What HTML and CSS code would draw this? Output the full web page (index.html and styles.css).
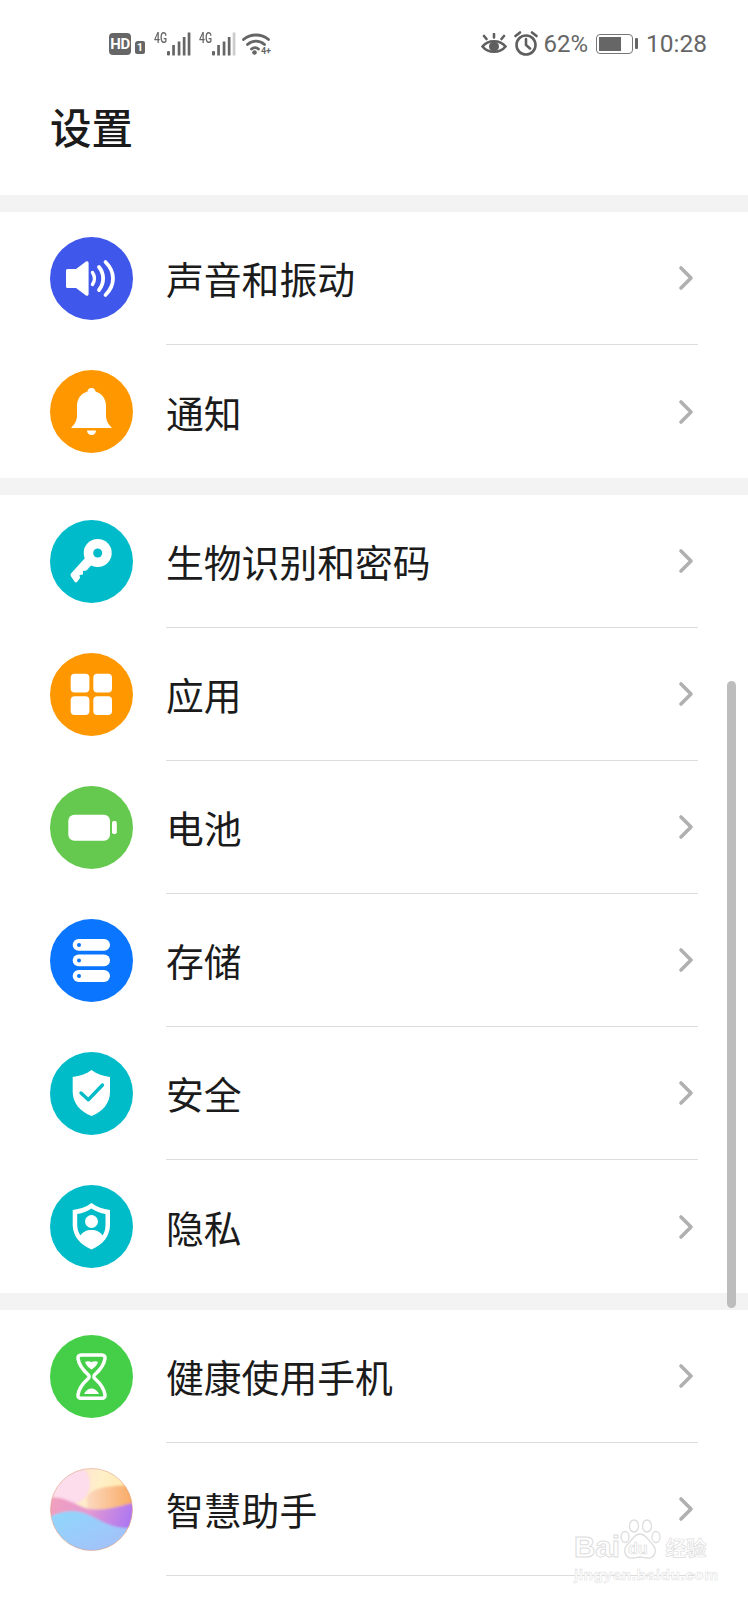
FILE: index.html
```html
<!DOCTYPE html>
<html lang="zh-CN">
<head>
    <meta charset="UTF-8">
    <title>设置</title>
    <meta name="viewport" content="width=device-width, initial-scale=1.0">
    <link rel="stylesheet" href="styles.css">
</head>
<body>
    <svg class="defs" width="0" height="0">
        <symbol id="chev" viewBox="0 0 18 28"><path d="M3 4l10 10L3 24" fill="none" stroke="#b0b0b0" stroke-width="3.600" stroke-linecap="round" stroke-linejoin="round"/></symbol>
        <symbol id="bars" viewBox="0 0 24 24"><g fill="#666"><rect x="0" y="19" width="3" height="4.500" rx="1"/><rect x="5.200" y="13" width="2.700" height="10.500"/><rect x="10.700" y="9.500" width="2.700" height="14"/><rect x="15.800" y="5" width="2.700" height="18.500"/><rect x="20.700" y="0.500" width="2.700" height="23"/></g></symbol>
        <symbol id="bars-weak" viewBox="0 0 24 24"><g fill="#666"><rect x="0" y="19" width="3" height="4.500" rx="1"/><rect x="5.200" y="13" width="2.700" height="10.500"/><rect x="10.700" y="9.500" width="2.700" height="14"/><rect x="15.800" y="5" width="2.700" height="18.500"/></g><rect x="20.700" y="0.500" width="2.700" height="23" fill="#ccc"/></symbol>
    </svg>

    <div class="status-bar">
        <div class="status-left">
            <span class="hd">HD</span>
            <span class="sim">1</span>
            <span class="signal"><span class="net">4G</span><svg class="bars" width="24" height="24"><use href="#bars"/></svg></span>
            <span class="signal"><span class="net">4G</span><svg class="bars" width="24" height="24"><use href="#bars-weak"/></svg></span>
            <span class="wifi">
                <svg width="28" height="22" viewBox="0 0 28 22" fill="none" stroke="#666" stroke-width="2.800" stroke-linecap="round">
                    <path d="M1.500 6.500C8.500 0.500 19.500 0.500 26.500 6.500"/>
                    <path d="M5.500 11.500C10.500 7 17.500 7 22.500 11.500"/>
                    <path d="M9.500 16C11.500 14.200 14.500 14.200 16.500 16"/>
                    <circle cx="12.500" cy="19.500" r="2.300" fill="#666" stroke="none"/>
                </svg>
                <span class="wifi-tag">4+</span>
            </span>
        </div>
        <div class="status-right">
            <svg width="26" height="22" viewBox="0 0 26 22" fill="none" stroke="#5f5f5f" stroke-width="2.600" stroke-linecap="round">
                <path d="M1.500 13.500C7 6.500 19 6.500 24.500 13.500C19 20.500 7 20.500 1.500 13.500Z"/>
                <circle cx="13" cy="13.500" r="5" fill="#5f5f5f" stroke="none"/>
                <path d="M3 3l2.500 3M13 1v3.500M23 3l-2.500 3"/>
            </svg>
            <svg class="alarm" width="24" height="25" viewBox="0 0 24 25" fill="none" stroke="#5f5f5f" stroke-width="2.600" stroke-linecap="round">
                <circle cx="12" cy="14" r="9.500"/>
                <path d="M12 8v6l4 3.500M1.500 5L6 1.500M22.500 5L18 1.500"/>
            </svg>
            <span class="pct">62%</span>
            <span class="battery"><span class="battery-fill"></span></span>
            <span class="battery-nub"></span>
            <span class="clock">10:28</span>
        </div>
    </div>

    <header class="title-bar">
        <h1>设置</h1>
    </header>

    <div class="band"></div>
    <ul class="group">
        <li class="row">
            <svg class="icon" viewBox="0 0 83 83">
                <circle cx="41.500" cy="41.500" r="41.500" fill="#3f57eb"/>
                <path d="M16 33.500a1.500 1.500 0 0 1 1.500-1.500H26l10-7.500c1.300-.9 2.600 0 2.600 1.500v31c0 1.500-1.300 2.400-2.600 1.500L26 51h-8.500a1.500 1.500 0 0 1-1.500-1.500Z" fill="#fff"/>
                <g fill="none" stroke="#fff" stroke-linecap="round">
                    <path d="M42.500 35.500c2.500 3.800 2.500 8.200 0 12" stroke-width="3.400"/>
                    <path d="M49 30c5.500 7 5.500 16 0 23" stroke-width="3.800"/>
                    <path d="M55.500 25c10 10 10 23 0 33" stroke-width="3.800"/>
                </g>
            </svg>
            <div class="row-body"><span class="label">声音和振动</span><svg class="chevron"><use href="#chev"/></svg></div>
        </li>
        <li class="row">
            <svg class="icon" viewBox="0 0 83 83">
                <circle cx="41.500" cy="41.500" r="41.500" fill="#ff9800"/>
                <path d="M41.500 18c2.400 0 4 1.700 4 3.600C52 23.500 56 29 56 36v10c0 5 3 9 6 12H21c3-3 6-7 6-12V36c0-7 4-12.500 10.500-14.400 0-1.900 1.600-3.600 4-3.600Z" fill="#fff"/>
                <path d="M37 60.500h9a4.500 4.500 0 0 1-9 0Z" fill="#fff"/>
            </svg>
            <div class="row-body last"><span class="label">通知</span><svg class="chevron"><use href="#chev"/></svg></div>
        </li>
    </ul>

    <div class="band"></div>
    <ul class="group">
        <li class="row">
            <svg class="icon" viewBox="0 0 83 83">
                <circle cx="41.500" cy="41.500" r="41.500" fill="#00bccb"/>
                <circle cx="47.700" cy="33" r="14" fill="#fff"/>
                <path d="M35.500 37.500L21 53.500q-1 1.500 0 3L24.500 61.500q1 1.500 2.500 .5L30 58L29.500 55L33 54.500L33 51L36.500 50.500L42 44.500Z" fill="#fff"/>
                <circle cx="47.700" cy="33" r="4.500" fill="#00bccb"/>
            </svg>
            <div class="row-body"><span class="label">生物识别和密码</span><svg class="chevron"><use href="#chev"/></svg></div>
        </li>
        <li class="row">
            <svg class="icon" viewBox="0 0 83 83">
                <circle cx="41.500" cy="41.500" r="41.500" fill="#ff9800"/>
                <g fill="#fff">
                    <rect x="20.700" y="20.700" width="18.700" height="18.700" rx="4"/>
                    <rect x="43.300" y="20.700" width="18.700" height="18.700" rx="4"/>
                    <rect x="20.700" y="43.300" width="18.700" height="18.700" rx="4"/>
                    <rect x="43.300" y="43.300" width="18.700" height="18.700" rx="4"/>
                </g>
            </svg>
            <div class="row-body"><span class="label">应用</span><svg class="chevron"><use href="#chev"/></svg></div>
        </li>
        <li class="row">
            <svg class="icon" viewBox="0 0 83 83">
                <circle cx="41.500" cy="41.500" r="41.500" fill="#66c94f"/>
                <rect x="18.300" y="28.700" width="41.700" height="26" rx="6" fill="#fff"/>
                <rect x="62" y="35" width="4.800" height="13" rx="1.800" fill="#fff"/>
            </svg>
            <div class="row-body"><span class="label">电池</span><svg class="chevron"><use href="#chev"/></svg></div>
        </li>
        <li class="row">
            <svg class="icon" viewBox="0 0 83 83">
                <circle cx="41.500" cy="41.500" r="41.500" fill="#0a75ff"/>
                <g fill="#fff">
                    <rect x="22.700" y="20" width="37.300" height="11.700" rx="5.800"/>
                    <rect x="22.700" y="35.500" width="37.300" height="11.700" rx="5.800"/>
                    <rect x="22.700" y="51" width="37.300" height="12" rx="6"/>
                </g>
                <g fill="#0a75ff">
                    <circle cx="29" cy="26" r="2"/>
                    <circle cx="29" cy="41.500" r="2"/>
                    <circle cx="29" cy="57" r="2"/>
                </g>
            </svg>
            <div class="row-body"><span class="label">存储</span><svg class="chevron"><use href="#chev"/></svg></div>
        </li>
        <li class="row">
            <svg class="icon" viewBox="0 0 83 83">
                <circle cx="41.500" cy="41.500" r="41.500" fill="#00bcc9"/>
                <path d="M41.500 18C47 22 53 24 60 25v15c0 11-7.500 20-18.500 24C30.500 60 22.700 51 22.700 40V25C30 24 36 22 41.500 18Z" fill="#fff"/>
                <path d="M31 41l7.300 6.700L52.500 33" fill="none" stroke="#00bcc9" stroke-width="3.400" stroke-linecap="round" stroke-linejoin="round"/>
            </svg>
            <div class="row-body"><span class="label">安全</span><svg class="chevron"><use href="#chev"/></svg></div>
        </li>
        <li class="row">
            <svg class="icon" viewBox="0 0 83 83">
                <circle cx="41.500" cy="41.500" r="41.500" fill="#00bcc9"/>
                <path d="M41.500 18C47 22 53 24 60 25v15c0 11-7.500 20-18.500 24.500C30.500 60 22.700 51 22.700 40V25C30 24 36 22 41.500 18Z" fill="#fff"/>
                <path d="M41.500 23.500C46 26.500 50 28 55.500 29v11c0 4-1 7.500-3 10.500-2-3.500-6-5.500-11-5.500s-9 2-11 5.500c-2-3-3.300-6.500-3.300-10.500V29C33 28 37 26.500 41.500 23.500Z" fill="#00bcc9"/>
                <circle cx="41.500" cy="36.500" r="6.500" fill="#fff"/>
            </svg>
            <div class="row-body last"><span class="label">隐私</span><svg class="chevron"><use href="#chev"/></svg></div>
        </li>
    </ul>

    <div class="band"></div>
    <ul class="group">
        <li class="row">
            <svg class="icon" viewBox="0 0 83 83">
                <circle cx="41.500" cy="41.500" r="41.500" fill="#45cf48"/>
                <path d="M31 20h21c2 0 3.300 1.500 3 3.500-1 7-5.500 12-10 16-1.500 1.300-1.500 3 0 4.300 4.500 4 9 9 10 16 .3 2-1 3.500-3 3.500H31c-2 0-3.300-1.500-3-3.500 1-7 5.500-12 10-16 1.500-1.300 1.500-3 0-4.300-4.500-4-9-9-10-16-.3-2 1-3.500 3-3.500Z" fill="none" stroke="#fff" stroke-width="3.500"/>
                <path d="M35 27c3-1.500 4.500-.5 6.500 0 2-.5 4-1.500 6.500 0-1 3-3.500 5.500-6.500 7.500-3-2-5.500-4.500-6.500-7.500ZM34 59c2-4 5-5.500 7.500-5.500S47 55 49 59Z" fill="#fff"/>
            </svg>
            <div class="row-body"><span class="label">健康使用手机</span><svg class="chevron"><use href="#chev"/></svg></div>
        </li>
        <li class="row">
            <svg class="icon" viewBox="0 0 83 83">
                <defs>
                    <clipPath id="orb"><circle cx="41.500" cy="41.500" r="41"/></clipPath>
                    <filter id="soft" x="-10%" y="-10%" width="120%" height="120%"><feGaussianBlur stdDeviation="1.200"/></filter>
                    <linearGradient id="orb-sky" x1="0" y1="0" x2="1" y2="0.300"><stop offset="0" stop-color="#fbd3dd"/><stop offset="0.600" stop-color="#fff0c8"/><stop offset="1" stop-color="#ffe6a8"/></linearGradient>
                    <linearGradient id="orb-warm" x1="0" y1="0" x2="1" y2="0"><stop offset="0" stop-color="#fdd9c0"/><stop offset="1" stop-color="#f8a860"/></linearGradient>
                    <linearGradient id="orb-mid" x1="0" y1="0" x2="1" y2="0.200"><stop offset="0" stop-color="#f2a0bb"/><stop offset="0.500" stop-color="#e59ad2"/><stop offset="1" stop-color="#ae78f0"/></linearGradient>
                    <linearGradient id="orb-low" x1="0" y1="0" x2="1" y2="1"><stop offset="0" stop-color="#8ed8fc"/><stop offset="1" stop-color="#a8bcf9"/></linearGradient>
                </defs>
                <g clip-path="url(#orb)">
                    <rect width="83" height="83" fill="url(#orb-sky)"/>
                    <g filter="url(#soft)">
                        <circle cx="20" cy="16" r="20" fill="#fddcec"/>
                        <path d="M37 28C43 20 55 18 84 17V50H37Z" fill="url(#orb-warm)"/>
                        <path d="M-2 30C10 28 20 33 30 38C42 44 60 42 85 34V72H-2Z" fill="url(#orb-mid)"/>
                        <path d="M-2 50C8 44 22 41 34 45C48 50 60 62 85 60V85H-2Z" fill="url(#orb-low)"/>
                    </g>
                </g>
                <circle cx="41.500" cy="41.500" r="41" fill="none" stroke="#e2a58c" stroke-opacity="0.600"/>
            </svg>
            <div class="row-body"><span class="label">智慧助手</span><svg class="chevron"><use href="#chev"/></svg></div>
        </li>
    </ul>

    <div class="scrollbar"></div>

    <div class="watermark">
        <svg class="paw" width="42" height="42" viewBox="0 0 42 42" fill="none" stroke="#ddd" stroke-width="1.300">
            <ellipse cx="14" cy="7" rx="4.500" ry="6"/>
            <ellipse cx="27" cy="7" rx="4.500" ry="6"/>
            <ellipse cx="5" cy="18" rx="4" ry="5.500"/>
            <ellipse cx="36" cy="18" rx="4" ry="5.500"/>
            <path d="M20 15c6 0 8 6 13 11 5 6 1 14-6 13-3 0-5-1-7-1s-4 1-7 1c-7 1-11-7-6-13 5-5 7-11 13-11Z"/>
        </svg>
        <div class="wm-top">
            <span class="wm-bai">Bai</span>
            <span class="wm-du">du</span>
            <span class="wm-jy">经验</span>
        </div>
        <div class="wm-url">jingyan.baidu.com</div>
    </div>
</body>
</html>
```

FILE: styles.css
```css
html, body {
    margin: 0;
    padding: 0;
    background: #fff;
}
body {
    position: relative;
    height: 1600px;
    overflow: hidden;
    font-family: "Noto Sans CJK SC", "Noto Sans", sans-serif;
    color: #1b1b1b;
}
.defs {
    position: absolute;
}
.status-bar {
    display: flex;
    justify-content: space-between;
    align-items: center;
    height: 87px;
    padding: 0 41px 0 109px;
    color: #666;
    font-family: Roboto, sans-serif;
}
.status-left,
.status-right {
    display: flex;
    align-items: center;
}
.hd {
    width: 22px;
    height: 22px;
    border-radius: 4px;
    background: #666;
    color: #fff;
    font-size: 15px;
    font-weight: 700;
    letter-spacing: -0.500px;
    line-height: 22px;
    text-align: center;
}
.sim {
    width: 10px;
    height: 13px;
    margin: 8px 9px 0 4px;
    border-radius: 3px 2px 2px 2px;
    background: #666;
    color: #fff;
    font-size: 11px;
    font-weight: 700;
    line-height: 13px;
    text-align: center;
}
.signal {
    display: flex;
    width: 37px;
    height: 24px;
    margin-right: 8px;
}
.net {
    flex: none;
    width: 13px;
    color: #666;
    font-size: 14px;
    font-weight: 500;
    line-height: 12px;
    transform: scaleX(0.75);
    transform-origin: left top;
}
.bars {
    display: block;
}
.wifi {
    display: flex;
    position: relative;
    width: 28px;
    height: 22px;
    margin-left: -2px;
}
.wifi-tag {
    position: absolute;
    right: -1px;
    bottom: -1px;
    color: #666;
    font-size: 9px;
    font-weight: 700;
    line-height: 9px;
}
.alarm {
    margin-left: 7px;
}
.pct {
    margin-left: 5px;
    font-size: 24px;
}
.battery {
    display: block;
    box-sizing: border-box;
    width: 37px;
    height: 20px;
    margin-left: 8px;
    padding: 2px;
    border: 1.500px solid #777;
    border-radius: 4px;
}
.battery-fill {
    display: block;
    width: 22px;
    height: 100%;
    background: #666;
}
.battery-nub {
    width: 3px;
    height: 11px;
    margin-left: 2px;
    border-radius: 1px;
    background: #666;
}
.clock {
    margin-left: 8px;
    font-size: 24.500px;
}
.title-bar {
    height: 108px;
    padding-left: 50px;
}
.title-bar h1 {
    margin: 0;
    font-size: 41.500px;
    font-weight: 500;
    line-height: 78px;
}
.band {
    height: 17px;
    background: #f3f3f3;
}
.group {
    margin: 0;
    padding: 0;
    list-style: none;
}
.row {
    display: flex;
    height: 133px;
    padding: 0 50px;
}
.icon {
    flex: none;
    width: 83px;
    height: 83px;
    margin: 25px 33px 0 0;
}
.row-body {
    display: flex;
    flex: 1;
    align-items: center;
    justify-content: space-between;
    box-sizing: border-box;
    border-bottom: 1px solid #dcdcdc;
}
.row-body.last {
    border-bottom: 0;
}
.label {
    font-size: 37.800px;
    line-height: 50px;
}
.chevron {
    width: 18px;
    height: 28px;
    margin-right: 2px;
}
.scrollbar {
    position: absolute;
    top: 681px;
    left: 727px;
    width: 9px;
    height: 627px;
    border-radius: 5px;
    background: #bdbdbd;
}
.watermark {
    position: absolute;
    top: 1519px;
    left: 574px;
    width: 140px;
    color: #e2e2e2;
}
.paw {
    position: absolute;
    top: 0;
    left: 46px;
}
.wm-top {
    display: flex;
    align-items: flex-end;
    height: 42px;
    white-space: nowrap;
    font-family: "Liberation Sans", sans-serif;
}
.wm-bai {
    color: #fff;
    font-size: 29.500px;
    font-weight: 700;
    line-height: 28px;
    -webkit-text-stroke: 1px #ddd;
}
.wm-du {
    margin-left: 8px;
    color: #fff;
    font-size: 16px;
    font-weight: 700;
    line-height: 24px;
    -webkit-text-stroke: 0.700px #ddd;
}
.wm-jy {
    margin-left: 18px;
    color: #fff;
    font-family: "Noto Sans CJK SC", sans-serif;
    font-size: 20.500px;
    font-weight: 700;
    line-height: 28px;
    -webkit-text-stroke: 0.700px #ddd;
}
.wm-url {
    margin-top: 5px;
    color: #fff;
    font-family: "Liberation Sans", sans-serif;
    font-size: 15.500px;
    font-weight: 700;
    line-height: 18px;
    letter-spacing: 0.500px;
    white-space: nowrap;
    -webkit-text-stroke: 0.500px #ddd;
}
```
